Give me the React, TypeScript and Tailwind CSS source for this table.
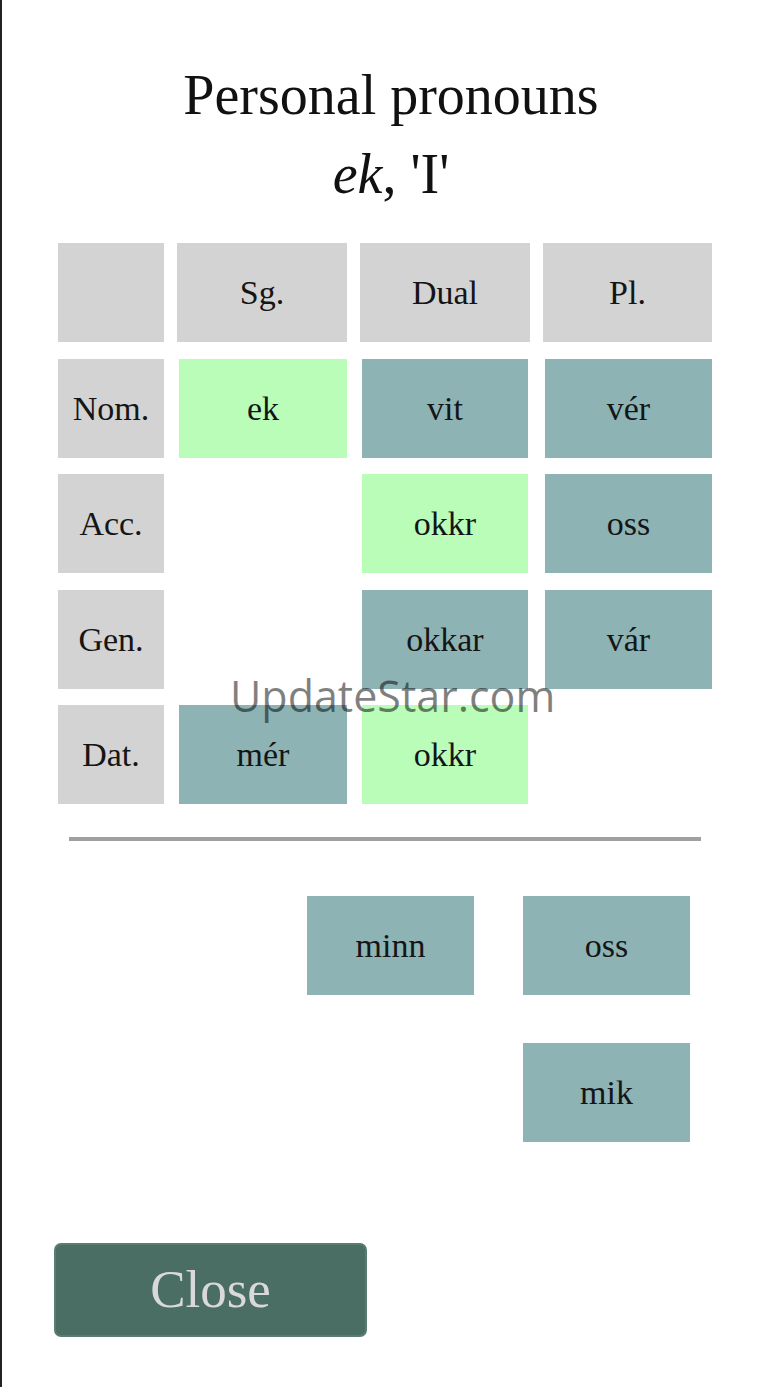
import React from "react";

const serif = "font-['Liberation_Serif','Times_New_Roman',serif]";

type Kind = "head" | "green" | "teal" | "empty";

function Cell({ kind, text, className = "" }: { kind: Kind; text?: string; className?: string }) {
  const bg =
    kind === "head"
      ? "bg-[#d3d3d3]"
      : kind === "green"
      ? "bg-[#b9fdb9]"
      : kind === "teal"
      ? "bg-[#8db3b5]"
      : "bg-transparent";
  return (
    <div
      className={`h-[99px] flex items-center justify-center text-[34px] text-[#151515] ${bg} ${className}`}
    >
      {text}
    </div>
  );
}

export default function App() {
  return (
    <div className={`relative w-[780px] h-[1387px] bg-white border-l-2 border-[#222] overflow-hidden ${serif}`}>
      <div className="pt-[56px] text-center text-[56px] leading-[79px] text-[#111]">
        <div>Personal pronouns</div>
        <div>
          <i>ek</i>, 'I'
        </div>
      </div>

      <div className="mt-[29px] ml-[56px] grid grid-cols-[106px_170px_170px_169px] gap-x-[13px] gap-y-[16.5px]">
        <Cell kind="head" />
        <Cell kind="head" text="Sg." />
        <Cell kind="head" text="Dual" />
        <Cell kind="head" text="Pl." />

        <Cell kind="head" text="Nom." />
        <Cell kind="green" text="ek" className="ml-[2px]" />
        <Cell kind="teal" text="vit" className="mx-[2px]" />
        <Cell kind="teal" text="vér" className="ml-[2px]" />

        <Cell kind="head" text="Acc." />
        <Cell kind="empty" />
        <Cell kind="green" text="okkr" className="mx-[2px]" />
        <Cell kind="teal" text="oss" className="ml-[2px]" />

        <Cell kind="head" text="Gen." />
        <Cell kind="empty" />
        <Cell kind="teal" text="okkar" className="mx-[2px]" />
        <Cell kind="teal" text="vár" className="ml-[2px]" />

        <Cell kind="head" text="Dat." />
        <Cell kind="teal" text="mér" className="ml-[2px]" />
        <Cell kind="green" text="okkr" className="mx-[2px]" />
        <Cell kind="empty" />
      </div>

      <div className="mt-[33px] ml-[67px] w-[632px] h-[4px] bg-[#a0a0a0]" />

      <div className="mt-[55px] ml-[89px] grid grid-cols-[167px_167px_167px] gap-x-[49px] gap-y-[48px]">
        <Cell kind="empty" />
        <Cell kind="teal" text="minn" />
        <Cell kind="teal" text="oss" />
        <Cell kind="empty" />
        <Cell kind="empty" />
        <Cell kind="teal" text="mik" />
      </div>

      <button className="mt-[101px] ml-[52px] w-[313px] h-[94px] rounded-[7px] bg-[#4b6e64] border-2 border-[#5a7d73] flex items-center justify-center text-[53px] text-[#d9d9d9]">
        Close
      </button>

      <div className="absolute left-[228px] top-[666px] text-[43px] leading-[60px] text-black/50 font-['Open_Sans','Noto_Sans',sans-serif] pointer-events-none">
        UpdateStar.com
      </div>
    </div>
  );
}
